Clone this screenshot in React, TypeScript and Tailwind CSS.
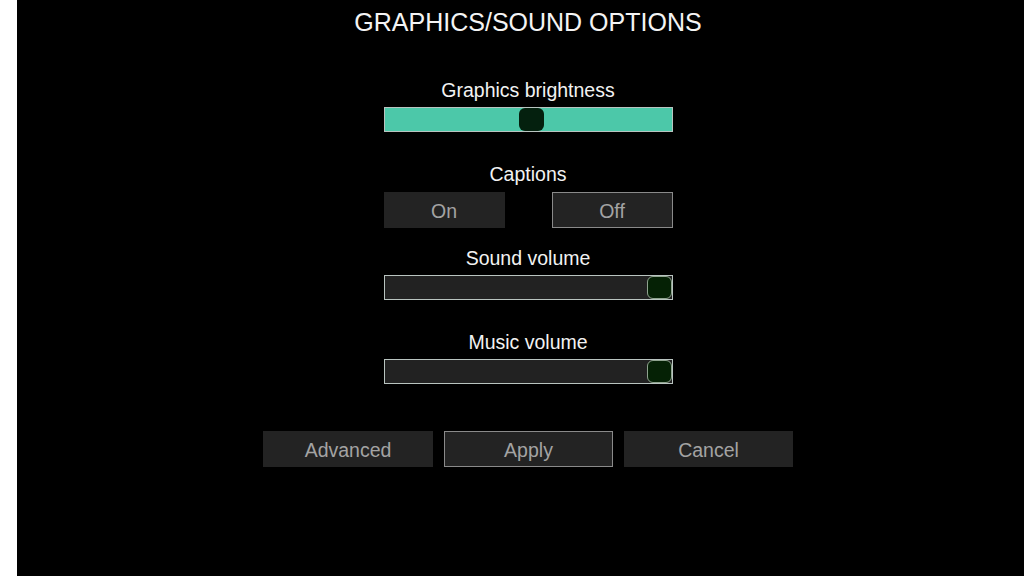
const font = { fontFamily: '"Liberation Sans", Arial, sans-serif' };

function Label({ children }: { children: string }) {
  return (
    <div className="text-[19.5px] leading-[22px] text-[#f2f2f2] text-center">
      {children}
    </div>
  );
}

function Slider({ value, filled }: { value: number; filled?: boolean }) {
  // value 0..1, thumb is 25px wide inside a 289px track
  const left = Math.round(value * (289 - 27));
  return (
    <div
      className={
        "relative w-[289px] h-[25px] border border-[#b9c4c0] " +
        (filled ? "bg-[#4cc8a9]" : "bg-[#222222] border-[#8c8c8c]")
      }
    >
      <div
        className={
          "absolute top-0 w-[25px] h-[23px] rounded-[6px] " +
          (filled ? "bg-[#04200e]" : "bg-[#052105] border border-[#8fa38f]")
        }
        style={{ left }}
      />
    </div>
  );
}

function Btn({
  children,
  w,
  selected,
}: {
  children: string;
  w: string;
  selected?: boolean;
}) {
  return (
    <button
      className={
        "h-[36px] pt-[3px] flex items-center justify-center bg-[#232323] text-[#a3a3a3] " +
        w +
        (selected ? " border border-[#8a8a8a]" : "")
      }
    >
      {children}
    </button>
  );
}

export default function App() {
  return (
    <div className="flex w-[1024px] h-[576px] bg-white overflow-hidden" style={font}>
      <div className="w-[17px] shrink-0 bg-white" />
      <div className="flex-1 bg-black pl-[15px] flex flex-col items-center">
        <h1 className="pt-[8px] text-[25px] leading-[28px] text-[#f4f4f4]">
          GRAPHICS/SOUND OPTIONS
        </h1>

        <div className="mt-[43px] flex flex-col items-center gap-[6px]">
          <Label>Graphics brightness</Label>
          <Slider value={0.51} filled />
        </div>

        <div className="mt-[31px] flex flex-col items-center gap-[7px]">
          <Label>Captions</Label>
          <div className="flex gap-[47px] text-[19.5px]">
            <Btn w="w-[121px]">On</Btn>
            <Btn w="w-[121px]" selected>
              Off
            </Btn>
          </div>
        </div>

        <div className="mt-[19px] flex flex-col items-center gap-[6px]">
          <Label>Sound volume</Label>
          <Slider value={1} />
        </div>

        <div className="mt-[31px] flex flex-col items-center gap-[6px]">
          <Label>Music volume</Label>
          <Slider value={1} />
        </div>

        <div className="mt-[47px] flex gap-[11px] text-[19.5px]">
          <Btn w="w-[170px]">Advanced</Btn>
          <Btn w="w-[169px]" selected>
            Apply
          </Btn>
          <Btn w="w-[169px]">Cancel</Btn>
        </div>
      </div>
    </div>
  );
}
